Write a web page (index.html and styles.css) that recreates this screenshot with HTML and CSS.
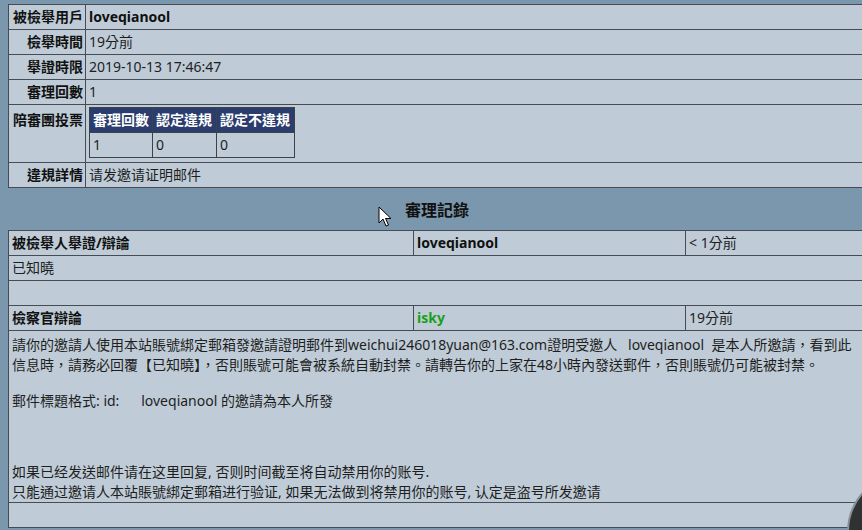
FILE: index.html
```html
<!DOCTYPE html>
<html lang="zh-Hant">
<head>
<meta charset="utf-8">
<title>審理記錄</title>
<link rel="stylesheet" href="styles.css">
</head>
<body>
<div class="page">
  <table class="info">
    <colgroup><col class="c-label"><col></colgroup>
    <tr><th class="lbl">被檢舉用戶</th><td><b>loveqianool</b></td></tr>
    <tr><th class="lbl">檢舉時間</th><td>19分前</td></tr>
    <tr><th class="lbl">舉證時限</th><td>2019-10-13 17:46:47</td></tr>
    <tr><th class="lbl">審理回數</th><td>1</td></tr>
    <tr class="vote-row"><th class="lbl top">陪審團投票</th><td class="vote-cell">
      <table class="vote">
        <tr><th>審理回數</th><th>認定違規</th><th>認定不違規</th></tr>
        <tr><td>1</td><td>0</td><td>0</td></tr>
      </table>
    </td></tr>
    <tr><th class="lbl">違規詳情</th><td>请发邀请证明邮件</td></tr>
  </table>

  <h2 class="title">審理記錄</h2>

  <table class="log">
    <colgroup><col class="c1"><col class="c2"><col></colgroup>
    <tr><th>被檢舉人舉證/辯論</th><th>loveqianool</th><td>&lt; 1分前</td></tr>
    <tr><td colspan="3">已知曉</td></tr>
    <tr><td colspan="3">&nbsp;</td></tr>
    <tr><th>檢察官辯論</th><th class="green">isky</th><td>19分前</td></tr>
    <tr><td colspan="3" class="content">
      <p class="p1">請你的邀請人使用本站賬號綁定郵箱發邀請證明郵件到weichui246018yuan@163.com證明受邀人&nbsp;&nbsp;&nbsp;loveqianool&nbsp;&nbsp;是本人所邀請，看到此<br>信息時，請務必回覆【已知曉】，否則賬號可能會被系統自動封禁。請轉告你的上家在48小時內發送郵件，否則賬號仍可能被封禁。</p>
      <p class="p2">郵件標題格式:&nbsp;id:&nbsp;&nbsp;&nbsp;&nbsp;&nbsp;&nbsp;loveqianool 的邀請為本人所發</p>
      <p class="p3">如果已经发送邮件请在这里回复, 否则时间截至将自动禁用你的账号.<br>只能通过邀请人本站賬號綁定郵箱进行验证, 如果无法做到将禁用你的账号, 认定是盗号所发邀请</p>
    </td></tr>
    <tr><td colspan="3">&nbsp;</td></tr>
  </table>
</div>

<svg class="cursor" width="14" height="22" viewBox="0 0 14 22" aria-hidden="true">
  <path d="M1 1 L1 17 L5 13 L8 20 L10.5 19 L7.5 12.5 L13 12.5 Z" fill="#fff" stroke="#000" stroke-width="1" stroke-linejoin="round"/>
</svg>
<div class="fab-clip"><div class="fab"></div></div>
</body>
</html>
```

FILE: styles.css
```css
html, body {
  margin: 0;
  padding: 0;
  overflow: hidden;
}
body {
  background: #7b97ad;
  font-family: "Noto Sans", "Noto Sans CJK SC", sans-serif;
  font-size: 14px;
  color: #1e1e1e;
  width: 862px;
  height: 530px;
  position: relative;
}
.page {
  padding: 4px 0 0 8px;
  width: 854px;
}
table {
  border-collapse: collapse;
}
.info, .log {
  width: 854px;
  table-layout: fixed;
  background: #bfccd7;
}
.info td, .info th, .log td, .log th {
  border: 1px solid #474c52;
  padding: 0 3px;
  height: 24px;
  line-height: 20px;
  text-align: left;
  font-weight: normal;
  white-space: nowrap;
}
.info > tbody > tr > td:last-child,
.log > tbody > tr > td:last-child {
  border-right: none;
}
.c-label { width: 77px; }
.info th.lbl {
  text-align: right;
  font-weight: bold;
  color: #111;
  padding: 0 2px 0 0;
}
.info th.top {
  vertical-align: top;
  padding-top: 5px;
}
.info b { font-weight: bold; color: #111; }
.info td.vote-cell {
  padding: 2px 3px 4px 3px;
}
.vote {
  border: 1px solid #3d4248;
}
.vote th, .vote td {
  border: 1px solid #3d4248;
  height: 24px;
  line-height: 20px;
  padding: 0 3px;
  text-align: left;
}
.vote th {
  background: #2a3d6c;
  color: #fff;
  font-weight: bold;
}
.vote td {
  width: 57px;
}
.vote td:first-child { width: 56px; }
.vote td:last-child { width: 71px; }

.title {
  margin: 0;
  height: 42px;
  line-height: 44px;
  font-size: 16px;
  font-weight: bold;
  color: #111;
  text-align: center;
  padding-left: 4px;
}
.c1 { width: 405px; }
.c2 { width: 272px; }
.log th {
  font-weight: bold;
  color: #111;
}
.log th.green { color: #18a018; }
.log td.content {
  height: 166px;
  vertical-align: top;
  padding: 4px 3px 0 3px;
}
.content p {
  margin: 0;
  line-height: 20px;
}
.content .p2 { margin-top: 16px; }
.content .p3 { margin-top: 51px; }

.cursor {
  position: absolute;
  left: 378px;
  top: 206px;
}
.fab-clip {
  position: absolute;
  left: 842px;
  top: 486px;
  width: 20px;
  height: 44px;
  overflow: hidden;
}
.fab {
  position: absolute;
  left: 5px;
  top: -14px;
  width: 116px;
  height: 116px;
  border-radius: 50%;
  background: #2f3133;
  border: 2px solid #8a9097;
}
```
